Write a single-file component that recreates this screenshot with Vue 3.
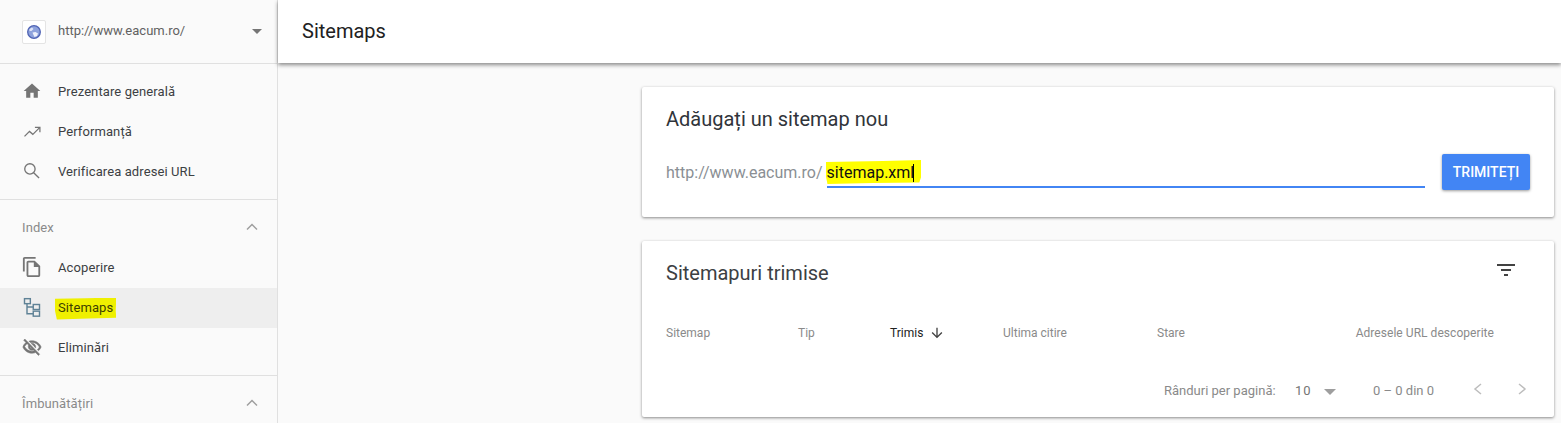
<script setup>
const header = ['Sitemap', 'Tip', 'Trimis', 'Ultima citire', 'Stare', 'Adresele URL descoperite']
</script>

<template>
  <div class="page">
    <aside class="sidebar">
      <div class="property">
        <span class="favicon">
          <svg width="16" height="16" viewBox="0 0 16 16">
            <circle cx="8" cy="8" r="6.300" fill="#8ea2dc" stroke="#4f63b4" stroke-width="1.300" />
            <path d="M6.500 8.500 9.500 8 12 9.500 11 12 8.500 13 7.500 11Z" fill="#eef1fb" />
            <path d="M3.500 5 6 3.500 7.500 5 5.500 7 3.500 7Z" fill="#dfe5f7" />
          </svg>
        </span>
        <span class="property-url">http://www.eacum.ro/</span>
        <span class="caret"></span>
      </div>
      <nav class="group first">
        <a class="item">
          <svg class="icon" viewBox="0 0 24 24"><path fill="#757575" d="M10 20v-6h4v6h5v-8h3L12 3 2 12h3v8z" /></svg>
          <span>Prezentare generală</span>
        </a>
        <a class="item">
          <svg class="icon" viewBox="0 0 24 24"><path fill="none" stroke="#757575" stroke-width="1.500" d="M3 18.500 9 12.500 13 16 20.500 8.500M15.500 7.500H21.500V13.500" /></svg>
          <span>Performanță</span>
        </a>
        <a class="item">
          <svg class="icon" viewBox="0 0 24 24"><g fill="none" stroke="#757575" stroke-width="1.600"><circle cx="9.500" cy="9.500" r="6.200" /><path d="M14 14 20.500 20.500" /></g></svg>
          <span>Verificarea adresei URL</span>
        </a>
      </nav>
      <section class="group">
        <div class="group-title">
          <span>Index</span>
          <svg class="chev" viewBox="0 0 24 24"><path fill="none" stroke="#9e9e9e" stroke-width="1.700" d="M6 15l6-6 6 6" /></svg>
        </div>
        <a class="item">
          <svg class="icon" viewBox="1 1 22 22"><path fill="#757575" d="M16 1H4c-1.100 0-2 .9-2 2v14h2V3h12V1zm-1 4H8c-1.100 0-2 .9-2 2v14c0 1.100.9 2 2 2h11c1.100 0 2-.9 2-2V11l-6-6zM8 21V7h6v5h5v9H8z" /></svg>
          <span>Acoperire</span>
        </a>
        <a class="item active">
          <svg class="icon" viewBox="0 0 24 24">
            <g fill="none" stroke="#5f8296" stroke-width="1.700">
              <rect x="3" y="2" width="7" height="6" />
              <rect x="13.500" y="9" width="7.500" height="6" />
              <rect x="13.500" y="17" width="7.500" height="6" />
              <path d="M6 8v12h7.500M6 12h7.500" />
            </g>
          </svg>
          <span class="marked">Sitemaps</span>
        </a>
        <a class="item">
          <svg class="icon" viewBox="0 0 24 24"><path fill="#757575" stroke="#757575" stroke-width=".6" d="M12 6.500c3.790 0 7.170 2.130 8.820 5.500-.59 1.220-1.420 2.270-2.410 3.120l1.410 1.410c1.390-1.230 2.490-2.770 3.180-4.530C21.270 7.610 17 4.500 12 4.500c-1.270 0-2.490.2-3.640.57l1.650 1.650c.65-.13 1.310-.22 1.990-.22zm-1.070 1.140L13 9.710c.57.25 1.030.71 1.280 1.280l2.070 2.070c.08-.34.140-.7.140-1.070C16.500 9.510 14.480 7.500 12 7.500c-.37 0-.72.050-1.070.14zM2.010 3.870l2.680 2.680A11.740 11.740 0 0 0 1 12c1.730 4.390 6 7.500 11 7.500 1.520 0 2.980-.29 4.320-.82l3.420 3.420 1.410-1.410L3.420 2.450 2.010 3.870zm7.500 7.500 2.610 2.610c-.04.010-.08.020-.12.020a2.500 2.500 0 0 1-2.500-2.500c0-.05.010-.08.010-.13zm-3.400-3.400 1.750 1.750a4.600 4.600 0 0 0-.36 1.780 4.507 4.507 0 0 0 6.270 4.140l.98.980c-.88.240-1.800.38-2.750.38-3.790 0-7.170-2.130-8.820-5.500.7-1.430 1.720-2.610 2.930-3.530z" /></svg>
          <span>Eliminări</span>
        </a>
      </section>
      <section class="group">
        <div class="group-title">
          <span>Îmbunătățiri</span>
          <svg class="chev" viewBox="0 0 24 24"><path fill="none" stroke="#9e9e9e" stroke-width="1.700" d="M6 15l6-6 6 6" /></svg>
        </div>
      </section>
    </aside>

    <div class="main">
      <header class="topbar">Sitemaps</header>
      <div class="content">
        <section class="card add">
          <h2 class="add-title">Adăugați un sitemap nou</h2>
          <div class="add-row">
            <span class="prefix">http://www.eacum.ro/</span>
            <div class="field"><span class="typed">sitemap.xml<i class="cursor"></i></span></div>
            <button class="submit">TRIMITEȚI</button>
          </div>
        </section>
        <section class="card sent">
          <div class="sent-head">
            <h2 class="sent-title">Sitemapuri trimise</h2>
            <svg class="filter" viewBox="0 0 24 24"><path fill="#424242" d="M3 6h18v2H3zM7 11h10v2H7zM10 16h4v2h-4z" /></svg>
          </div>
          <div class="columns">
            <span v-for="(h, i) in header" :key="h" :class="['col', 'col' + i]">
              {{ h }}
              <svg v-if="i === 2" class="sort" viewBox="0 0 24 24"><path fill="#424242" d="M20 12l-1.410-1.410L13 16.170V4h-2v12.170l-5.580-5.590L4 12l8 8 8-8z" /></svg>
            </span>
          </div>
          <div class="pager">
            <span class="rows">Rânduri per pagină:</span>
            <span class="count">10</span>
            <span class="caret small"></span>
            <span class="range">0 – 0 din 0</span>
            <svg class="nav-arrow" viewBox="0 0 24 24"><path fill="none" stroke="#bdbdbd" stroke-width="1.500" d="M15 7l-6 5 6 5" /></svg>
            <svg class="nav-arrow" viewBox="0 0 24 24"><path fill="none" stroke="#bdbdbd" stroke-width="1.500" d="M9 7l6 5-6 5" /></svg>
          </div>
        </section>
      </div>
    </div>
  </div>
</template>

<style>
html, body { margin: 0; background: #fafafa; overflow: hidden; }
</style>

<style scoped>
.page {
  display: flex;
  width: 1561px;
  height: 423px;
  overflow: hidden;
  background: #fafafa;
  font-family: Roboto, "Liberation Sans", sans-serif;
  color: #3c4043;
}
.sidebar {
  flex: 0 0 277px;
  border-right: 1px solid #e0e0e0;
  background: #fafafa;
}
.property {
  height: 63px;
  box-sizing: border-box;
  display: flex;
  align-items: center;
  padding: 0 15px 0 22px;
  border-bottom: 0;
  box-shadow: 0 1px 0 #e0e0e0;
  margin-bottom: 1px;
  font-size: 13px;
  color: #616161;
}
.favicon {
  width: 24px;
  height: 24px;
  box-sizing: border-box;
  border: 1px solid #e4e4e4;
  border-radius: 2px;
  background: #fff;
  display: flex;
  align-items: center;
  justify-content: center;
  margin-right: 12px;
}
.property-url { flex: 1; margin-top: -2px; }
.caret {
  width: 0;
  height: 0;
  border-left: 5px solid transparent;
  border-right: 5px solid transparent;
  border-top: 5px solid #757575;
}
.group { border-top: 1px solid #e0e0e0; padding: 0 0 7px; }
.first { border-top: 0; padding: 8px 0 7px; }
.item {
  height: 40px;
  box-sizing: border-box;
  display: flex;
  align-items: center;
  padding: 0 0 2px 22px;
  font-size: 13px;
  color: #3c4043;
  letter-spacing: 0.1px;
}
.item.active { background: #eeeeee; }
.icon { width: 20px; height: 20px; margin-right: 16px; flex: none; }
.marked {
  background: #eff000;
  color: #3d3f00;
  margin: 3px -3px 0;
  padding: 2px 3px 5px;
  clip-path: polygon(0 6%, 50% 3%, 100% 0, 99% 60%, 100% 92%, 55% 95%, 3% 100%, 0 60%);
}
.group-title {
  height: 48px;
  padding: 6px 15px 0 22px;
  box-sizing: border-box;
  display: flex;
  align-items: center;
  justify-content: space-between;
  font-size: 13px;
  color: #8a8a8a;
  letter-spacing: 0.1px;
}
.chev { width: 20px; height: 20px; }

.main { flex: 1; display: flex; flex-direction: column; min-width: 0; }
.topbar {
  flex: none;
  height: 63px;
  box-sizing: border-box;
  display: flex;
  align-items: center;
  padding: 0 0 2px 24px;
  background: #fff;
  font-size: 20px;
  color: #212121;
  box-shadow: 0 2px 4px rgba(0, 0, 0, .45);
  position: relative;
  z-index: 1;
}
.content { padding: 24px 0 0 364px; }
.card {
  width: 912px;
  background: #fff;
  border-radius: 2px;
  box-shadow: 0 1px 3px rgba(0, 0, 0, .45);
  box-sizing: border-box;
}
.add { height: 130px; padding: 0 24px; margin-bottom: 24px; }
.add-title {
  margin: 0;
  padding-top: 20px;
  font-size: 20px;
  line-height: 24px;
  font-weight: 400;
  color: #30343a;
}
.add-row { display: flex; align-items: flex-start; margin-top: 29px; }
.prefix {
  font-size: 16px;
  line-height: 26px;
  color: #8a8f94;
  margin-right: 4px;
}
.field {
  flex: 1;
  height: 25px;
  border-bottom: 2px solid #4285f4;
  margin-top: 1px;
  font-size: 16px;
  line-height: 24px;
  color: #111;
}
.typed {
  display: inline-block;
  background: #ffff00;
  padding: 1px 7px 0 1px;
  margin: -1px 0 0 -1px;
  height: 24px;
  box-sizing: border-box;
  vertical-align: top;
  clip-path: polygon(0 8%, 60% 4%, 100% 0, 100% 70%, 98% 94%, 50% 96%, 2% 100%, 0 60%);
}
.cursor {
  display: inline-block;
  width: 1px;
  height: 18px;
  background: #000;
  margin-left: -1px;
  vertical-align: -4px;
}
.submit {
  margin: -6px 0 0 17px;
  width: 88px;
  height: 36px;
  border: 0;
  border-radius: 2px;
  background: #4285f4;
  color: #fff;
  font: 500 14px Roboto, sans-serif;
  box-shadow: 0 1px 3px rgba(0, 0, 0, .4);
  padding: 0;
}
.sent { height: 176px; }
.sent-head {
  display: flex;
  align-items: center;
  justify-content: space-between;
  height: 64px;
  padding: 0 24px;
}
.sent-title {
  margin: 0;
  font-size: 20px;
  font-weight: 400;
  color: #3c4043;
}
.filter { width: 24px; height: 24px; margin-right: 12px; margin-top: -6px; }
.columns {
  position: relative;
  height: 20px;
  margin-top: 18px;
  font-size: 12px;
  line-height: 20px;
  color: #8a8a8a;
}
.col { position: absolute; top: 0; white-space: nowrap; }
.col0 { left: 24px; }
.col1 { left: 156px; }
.col2 { left: 248px; color: #212121; display: flex; align-items: center; }
.col3 { left: 361px; }
.col4 { left: 515px; }
.col5 { right: 60px; letter-spacing: 0.05px; }
.sort { width: 16px; height: 16px; margin-left: 6px; margin-top: -1px; }
.pager {
  display: flex;
  align-items: center;
  height: 24px;
  margin-top: 35px;
  padding-left: 522px;
  font-size: 13px;
  color: #8a8a8a;
}
.rows { width: 131px; }
.count { width: 29px; color: #757575; letter-spacing: 1px; }
.caret.small {
  border-top-color: #9e9e9e;
  border-left-width: 6px;
  border-right-width: 6px;
  border-top-width: 6px;
  margin-top: 4px;
  margin-right: 37px;
}
.range { width: 93px; }
.nav-arrow { width: 24px; height: 24px; margin-right: 20px; margin-top: -2px; }
</style>
